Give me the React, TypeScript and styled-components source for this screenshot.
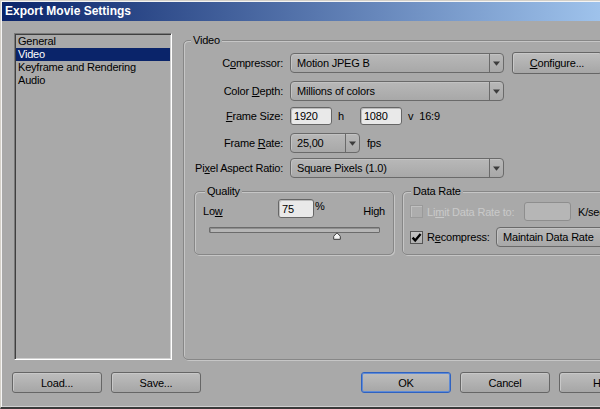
import React from "react";
import styled, { createGlobalStyle } from "styled-components";

const Global = createGlobalStyle`
  html, body { margin: 0; padding: 0; width: 600px; height: 409px; overflow: hidden; background: #a9a9a9; }
  #root { width: 600px; height: 409px; overflow: hidden; }
  * { box-sizing: border-box; }
`;

const FONT = `"Liberation Sans", Arial, sans-serif`;

const Window = styled.div`
  width: 664px;
  height: 409px;
  background: #a9a9a9;
  border-top: 1px solid #d4d0c8;
  border-left: 1px solid #d4d0c8;
  border-right: 2px solid #3a3a3a;
  border-bottom: 2px solid #3a3a3a;
  box-shadow: inset 1px 1px 0 #f4f4f4, inset 0 -1px 0 #d0d0d0;
  padding: 1px 1px 0 1px;
  display: flex;
  flex-direction: column;
  font-family: ${FONT};
  font-size: 11px;
  letter-spacing: -0.2px;
  color: #000;
`;

const TitleBar = styled.div`
  height: 19px;
  flex: none;
  background: linear-gradient(90deg, #0a246a 0px, #9fc3ec 600px, #a6caf0 662px);
  color: #fff;
  font-weight: bold;
  font-size: 12px;
  letter-spacing: 0;
  line-height: 19px;
  padding-left: 3px;
  white-space: nowrap;
`;

const Content = styled.div`
  padding: 12px 12px 0 10px;
  display: flex;
  flex-direction: column;
`;

const MainRow = styled.div`
  height: 327px;
  display: flex;
  align-items: stretch;
`;

const ListBox = styled.div`
  width: 158px;
  margin-left: 2px;
  flex: none;
  border: 1px solid;
  border-color: #7a7a7a #ffffff #ffffff #7a7a7a;
  box-shadow: inset 1px 1px 0 #3f3f3f, inset -1px -1px 0 #cfcfcf;
  padding: 1px;
  background: #a9a9a9;
`;

const ListItem = styled.div<{ $selected?: boolean }>`
  height: 13px;
  line-height: 13px;
  padding-left: 2px;
  white-space: nowrap;
  background: ${(p) => (p.$selected ? "#0a246a" : "transparent")};
  color: ${(p) => (p.$selected ? "#fff" : "#000")};
`;

const Group = styled.fieldset<{ $pad?: string }>`
  margin: 0;
  min-width: 0;
  border: 1px solid #878787;
  border-radius: 5px;
  box-shadow: inset 1px 1px 0 #c6c6c6, 1px 1px 0 #c6c6c6;
  padding: ${(p) => p.$pad || "0"};
`;

const VideoGroup = styled(Group)`
  flex: 1;
  margin-left: 11px;
  margin-top: 1px;
`;

const Legend = styled.legend<{ $ml?: number }>`
  padding: 0 2px;
  margin-left: ${(p) => p.$ml ?? 0}px;
  line-height: 13px;
  height: 13px;
  background: #a9a9a9;
`;

const Row = styled.div<{ $mt?: number }>`
  display: flex;
  align-items: center;
  height: 20px;
  margin-top: ${(p) => p.$mt ?? 0}px;
  white-space: nowrap;
`;

const Label = styled.div`
  width: 90px;
  margin-right: 7px;
  text-align: right;
  white-space: nowrap;
  direction: rtl;
  overflow: visible;
  flex: none;
`;

const LabelInner = styled.span`
  direction: ltr;
  unicode-bidi: embed;
`;

const Select = styled.div<{ $w: number }>`
  width: ${(p) => p.$w}px;
  height: 20px;
  flex: none;
  display: flex;
  align-items: stretch;
  border: 1px solid #6a6a6a;
  border-radius: 4px;
  background: linear-gradient(#b8b8b8, #a8a8a8);
  box-shadow: inset 1px 1px 0 #c2c2c2;
`;

const SelectValue = styled.div`
  flex: 1;
  padding-left: 6px;
  display: flex;
  align-items: center;
  white-space: nowrap;
  overflow: hidden;
`;

const SelectArrow = styled.div`
  width: 14px;
  border-left: 1px solid #6a6a6a;
  display: flex;
  align-items: center;
  justify-content: center;
`;

const Button = styled.div<{ $default?: boolean; $w?: number; $h?: number }>`
  width: ${(p) => p.$w ?? 90}px;
  height: ${(p) => p.$h ?? 21}px;
  flex: none;
  display: flex;
  align-items: center;
  justify-content: center;
  border: 1px solid ${(p) => (p.$default ? "#2f62c0" : "#666666")};
  border-radius: 3px;
  background: linear-gradient(#bdbdbd, #a6a6a6);
  box-shadow: ${(p) =>
    p.$default ? "inset 0 0 0 1px #5e8ad6" : "inset 1px 1px 0 #c8c8c8"};
  white-space: nowrap;
`;

const TextInput = styled.div<{ $w: number; $h?: number; $disabled?: boolean }>`
  width: ${(p) => p.$w}px;
  height: ${(p) => p.$h ?? 18}px;
  flex: none;
  border: 1px solid ${(p) => (p.$disabled ? "#8e8e8e" : "#666666")};
  border-radius: 3px;
  background: ${(p) => (p.$disabled ? "#b6b6b6" : "#e9e9e9")};
  box-shadow: ${(p) => (p.$disabled ? "none" : "inset 1px 1px 0 #bcbcbc")};
  padding-left: 3px;
  display: flex;
  align-items: center;
`;

const Unit = styled.span<{ $ml: number; $mr?: number }>`
  margin-left: ${(p) => p.$ml}px;
  margin-right: ${(p) => p.$mr ?? 0}px;
`;

const SubRow = styled.div`
  display: flex;
  align-items: stretch;
  margin-top: 7px;
  margin-left: 1px;
`;

const QualityGroup = styled(Group)`
  width: 200px;
  flex: none;
`;

const DataRateGroup = styled(Group)`
  width: 250px;
  flex: none;
  margin-left: 8px;
`;

const QualityTop = styled.div`
  display: grid;
  grid-template-columns: 75px auto 1fr;
  align-items: end;
  height: 19px;
`;

const Pct = styled.div`
  display: flex;
  align-items: flex-start;
  height: 19px;
`;

const PctSign = styled.span`
  margin-left: 1px;
  line-height: 13px;
  margin-top: 1px;
`;

const Bottom = styled.span<{ $right?: boolean }>`
  line-height: 13px;
  text-align: ${(p) => (p.$right ? "right" : "left")};
`;

const Track = styled.div`
  position: relative;
  height: 6px;
  margin: 9px 5px 0 6px;
  border: 1px solid #6c6c6c;
  border-radius: 1px;
  background: #b6b6b6;
  box-shadow: inset 1px 1px 0 #8e8e8e;
`;

const Thumb = styled.svg`
  position: absolute;
  top: 4px;
  width: 8px;
  height: 8px;
`;

const CheckRow = styled.div<{ $mt?: number; $h: number }>`
  display: flex;
  align-items: center;
  height: ${(p) => p.$h}px;
  margin-top: ${(p) => p.$mt ?? 0}px;
  white-space: nowrap;
`;

const Box = styled.div<{ $disabled?: boolean }>`
  width: 13px;
  height: 13px;
  flex: none;
  border: 1px solid ${(p) => (p.$disabled ? "#9a9a9a" : "#555555")};
  background: ${(p) => (p.$disabled ? "#adadad" : "linear-gradient(#c4c4c4, #b0b0b0)")};
  box-shadow: ${(p) => (p.$disabled ? "inset 1px 1px 0 #c0c0c0" : "none")};
  display: flex;
  align-items: center;
  justify-content: center;
`;

const CheckLabel = styled.span<{ $w: number; $disabled?: boolean }>`
  width: ${(p) => p.$w}px;
  margin-left: 4px;
  flex: none;
  color: ${(p) => (p.$disabled ? "#c9c9c9" : "#000")};
`;

const Footer = styled.div`
  display: flex;
  margin-top: 12px;
  gap: 9px;
`;

const Spacer = styled.div`
  flex: 1;
`;

const Arrow = () => (
  <svg width="7" height="5" viewBox="0 0 7 5">
    <path d="M0 0.5 H7 L3.5 4.8 Z" fill="#3c3c3c" />
  </svg>
);

const Dropdown = ({ w, children }: { w: number; children: React.ReactNode }) => (
  <Select $w={w}>
    <SelectValue>{children}</SelectValue>
    <SelectArrow>
      <Arrow />
    </SelectArrow>
  </Select>
);

const Checkbox = ({ checked, disabled }: { checked?: boolean; disabled?: boolean }) => (
  <Box $disabled={disabled}>
    {checked && (
      <svg width="11" height="11" viewBox="0 0 11 11">
        <path d="M1.6 5.6 L4.2 8.4 L9.6 2" stroke="#000" strokeWidth="2.3" fill="none" />
      </svg>
    )}
  </Box>
);

export default function App() {
  const quality = 75;
  return (
    <>
      <Global />
      <Window>
        <TitleBar>Export Movie Settings</TitleBar>
        <Content>
          <MainRow>
            <ListBox>
              <ListItem>General</ListItem>
              <ListItem $selected>Video</ListItem>
              <ListItem>Keyframe and Rendering</ListItem>
              <ListItem>Audio</ListItem>
            </ListBox>
            <VideoGroup $pad="6px 0 0 9px">
              <Legend $ml={-2}>Video</Legend>
              <Row>
                <Label>
                  <LabelInner>
                    C<u>o</u>mpressor:
                  </LabelInner>
                </Label>
                <Dropdown w={214}>Motion JPEG B</Dropdown>
                <Unit $ml={8} />
                <Button $h={22}>
                  <span>
                    <u>C</u>onfigure...
                  </span>
                </Button>
              </Row>
              <Row $mt={8}>
                <Label>
                  <LabelInner>
                    Color <u>D</u>epth:
                  </LabelInner>
                </Label>
                <Dropdown w={214}>Millions of colors</Dropdown>
              </Row>
              <Row $mt={5}>
                <Label>
                  <LabelInner>
                    <u>F</u>rame Size:
                  </LabelInner>
                </Label>
                <TextInput $w={42}>1920</TextInput>
                <Unit $ml={6} $mr={16}>
                  h
                </Unit>
                <TextInput $w={42}>1080</TextInput>
                <Unit $ml={6}>v</Unit>
                <Unit $ml={6}>16:9</Unit>
              </Row>
              <Row $mt={7}>
                <Label>
                  <LabelInner>
                    Frame <u>R</u>ate:
                  </LabelInner>
                </Label>
                <Dropdown w={70}>25,00</Dropdown>
                <Unit $ml={7}>fps</Unit>
              </Row>
              <Row $mt={5}>
                <Label>
                  <LabelInner>
                    Pi<u>x</u>el Aspect Ratio:
                  </LabelInner>
                </Label>
                <Dropdown w={214}>Square Pixels (1.0)</Dropdown>
              </Row>
              <SubRow>
                <QualityGroup $pad="1px 8px 0 8px">
                  <Legend $ml={2}>Quality</Legend>
                  <QualityTop>
                    <Bottom>
                      Lo<u>w</u>
                    </Bottom>
                    <Pct>
                      <TextInput $w={36} $h={19}>
                        {quality}
                      </TextInput>
                      <PctSign>%</PctSign>
                    </Pct>
                    <Bottom $right>High</Bottom>
                  </QualityTop>
                  <Track>
                    <Thumb
                      viewBox="0 0 8 8"
                      style={{ left: `calc(${quality}% - 4px)` }}
                    >
                      <path
                        d="M4 0.8 L7.3 4.2 V7.3 H0.7 V4.2 Z"
                        fill="#f4f4f4"
                        stroke="#3a3a3a"
                        strokeWidth="1"
                      />
                    </Thumb>
                  </Track>
                </QualityGroup>
                <DataRateGroup $pad="4px 0 7px 7px">
                  <Legend $ml={1}>Data Rate</Legend>
                  <CheckRow $h={19}>
                    <Checkbox disabled />
                    <CheckLabel $w={97} $disabled>
                      Li<u>m</u>it Data Rate to:
                    </CheckLabel>
                    <TextInput $w={47} $h={19} $disabled />
                    <Unit $ml={7}>K/sec</Unit>
                  </CheckRow>
                  <CheckRow $h={20} $mt={6}>
                    <Checkbox checked />
                    <CheckLabel $w={69}>
                      R<u>e</u>compress:
                    </CheckLabel>
                    <Dropdown w={140}>Maintain Data Rate</Dropdown>
                  </CheckRow>
                </DataRateGroup>
              </SubRow>
            </VideoGroup>
          </MainRow>
          <Footer>
            <Button>Load...</Button>
            <Button>Save...</Button>
            <Spacer />
            <Button $default>OK</Button>
            <Button>Cancel</Button>
            <Button>Help</Button>
          </Footer>
        </Content>
      </Window>
    </>
  );
}
